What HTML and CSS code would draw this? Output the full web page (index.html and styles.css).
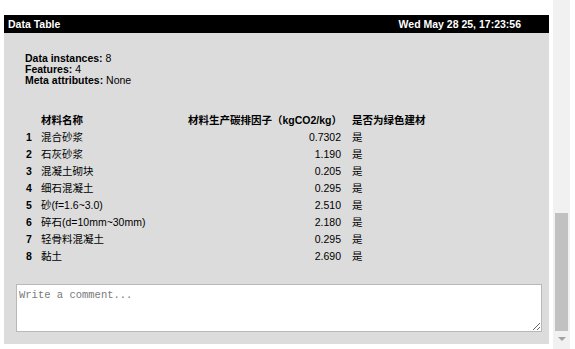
FILE: index.html
```html
<!DOCTYPE html>
<html>
<head>
<meta charset="utf-8">
<link rel="stylesheet" href="styles.css">
</head>
<body>
<div class="page">
  <div class="panel">
    <div class="header">
      <span>Data Table</span>
      <span>Wed May 28 25, 17:23:56</span>
    </div>
    <div class="info">
      <div><b>Data instances:</b> 8</div>
      <div><b>Features:</b> 4</div>
      <div><b>Meta attributes:</b> None</div>
    </div>
    <div class="table">
      <div class="idx"></div><div class="hd">材料名称</div><div class="hd">材料生产碳排因子（kgCO2/kg）</div><div class="hd res">是否为绿色建材</div>
      <div class="idx">1</div><div>混合砂浆</div><div class="num">0.7302</div><div class="res">是</div>
      <div class="idx">2</div><div>石灰砂浆</div><div class="num">1.190</div><div class="res">是</div>
      <div class="idx">3</div><div>混凝土砌块</div><div class="num">0.205</div><div class="res">是</div>
      <div class="idx">4</div><div>细石混凝土</div><div class="num">0.295</div><div class="res">是</div>
      <div class="idx">5</div><div>砂(f=1.6~3.0)</div><div class="num">2.510</div><div class="res">是</div>
      <div class="idx">6</div><div>碎石(d=10mm~30mm)</div><div class="num">2.180</div><div class="res">是</div>
      <div class="idx">7</div><div>轻骨料混凝土</div><div class="num">0.295</div><div class="res">是</div>
      <div class="idx">8</div><div>黏土</div><div class="num">2.690</div><div class="res">是</div>
    </div>
    <textarea class="comment" placeholder="Write a comment..."></textarea>
  </div>
  <div class="scrollbar">
    <div class="thumb"></div>
    <div class="arrow"></div>
  </div>
</div>
</body>
</html>
```
FILE: styles.css
```css
html, body {
  margin: 0;
  padding: 0;
  background: #ffffff;
}
body {
  width: 575px;
  height: 349px;
  overflow: hidden;
  font-family: "Liberation Sans", Arial, "Noto Sans CJK SC", sans-serif;
  font-size: 10.5px;
  color: #000;
}
.page {
  display: flex;
  height: 349px;
}
.panel {
  margin: 15px 0 0 4px;
  width: 545px;
  height: 329px;
  background: #dcdcdc;
  display: flex;
  flex-direction: column;
}
.header {
  background: #000;
  color: #fff;
  font-weight: bold;
  height: 18px;
  line-height: 18px;
  display: flex;
  justify-content: space-between;
  padding: 0 28px 0 4px;
}
.info {
  padding: 20px 0 0 21px;
  line-height: 11px;
  height: 30px;
}
.table {
  margin: 29px 0 0 21px;
  display: grid;
  grid-template-columns: 16px 147px 153px auto;
  grid-auto-rows: 17px;
  line-height: 17px;
  white-space: nowrap;
}
.hd {
  font-weight: bold;
}
.idx {
  font-weight: bold;
  padding-left: 1px;
}
.num {
  text-align: right;
}
.res {
  padding-left: 11px;
}
.comment {
  margin: 19px 0 0 12px;
  width: 526px;
  height: 48px;
  box-sizing: border-box;
  border: 1px solid #b8b8b8;
  background: #fff;
  padding: 4px 2px 2px 2px;
  font-family: "Liberation Mono", "Courier New", monospace;
  font-size: 10.5px;
  outline: none;
  resize: both;
}
.comment::placeholder {
  color: #7a7a7a;
}
.scrollbar {
  margin-left: 4px;
  width: 17px;
  height: 349px;
  background: #f1f1f1;
  position: relative;
}
.thumb {
  position: absolute;
  left: 2px;
  top: 213px;
  width: 13px;
  height: 118px;
  background: #c1c1c1;
}
.arrow {
  position: absolute;
  left: 5px;
  top: 337px;
  width: 0;
  height: 0;
  border-left: 4px solid transparent;
  border-right: 4px solid transparent;
  border-top: 4px solid #a3a3a3;
}
```
